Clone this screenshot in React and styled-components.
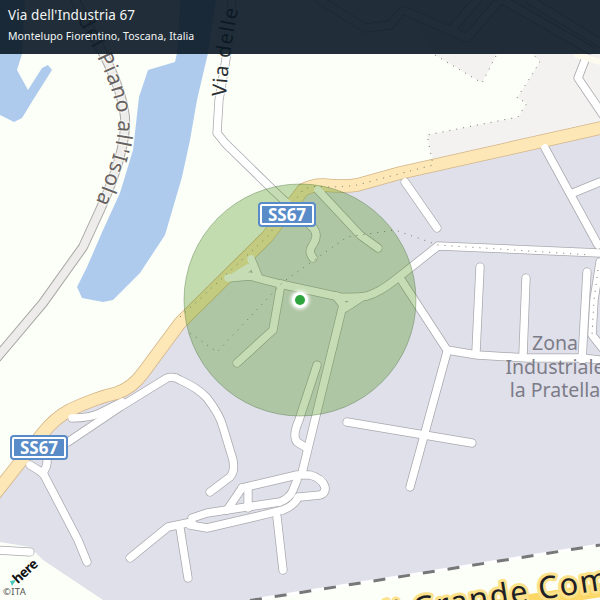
import React from 'react';
import styled, { createGlobalStyle } from 'styled-components';

const GlobalStyle = createGlobalStyle`
  html, body { margin: 0; padding: 0; background: #fcfff8; }
  body { font-family: "Noto Sans", sans-serif; }
`;

// white street network, in map coordinates
const streets = [
  'M228 278 L250 276 L280 284 L340 297 Q356 298 367 296 Q380 292 395 280 L438 246 L600 253',
  'M251 259 L258 276',
  'M235 276 L248 268',
  'M336 296 L345 308 L362 297',
  'M343 305 L302 473',
  'M317 365 L299 420 Q292 436 297 442 L305 447',
  'M281 284 L273 330 L237 363',
  'M318 190 L360 235 L378 248',
  'M273 190 L305 220 L314 229 Q319 236 312 246 Q308 252 313 258',
  'M232 0 L227 53 L219 100 L217 133 L225 143 L273 190',
  'M400 278 L447 350 L477 355 L527 358 L582 358 L600 360',
  'M447 352 L410 487',
  'M347 422 L472 443',
  'M405 182 L437 228',
  'M480 267 L476 352',
  'M526 278 L523 355',
  'M587 272 L582 360',
  'M545 148 L598 245',
  'M573 193 L600 182',
  'M600 262 L594 300 L592 335 L604 350',
  'M68 442 L120 407 L167 378 Q174 376 180 380 Q198 388 207 398 Q220 415 223 427 L233 460 Q235 472 230 477 L210 492',
  'M72 418 Q90 418 100 413 L122 402',
  'M30 465 L43 473 L78 540 L87 562',
  'M47 458 Q48 468 42 473',
  'M130 558 L168 527 L192 522',
  'M192 518 L207 513 L240 508 L280 502 Q290 498 293 490 L297 480',
  'M190 525 L207 528 L250 518 L283 510 Q295 505 298 497',
  'M242 488 L297 475 L310 475 Q322 478 325 487 Q326 493 320 495 L300 497',
  'M242 488 L227 510',
  'M248 488 L248 508',
  'M277 517 L283 570',
  'M180 528 L188 578',
  'M-5 550 L30 552',
  'M585 60 L578 78 L603 115',
  'M320 0 L365 28 L390 25 L403 10 L467 38 L500 0',
  'M453 28 L477 0',
  'M503 0 L590 50',
  'M530 0 L600 43',
];

const MapFrame = styled.main`
  position: relative;
  width: 600px;
  height: 600px;
  overflow: hidden;
  background: #fcfff8;
`;

const MapDrawing = styled.svg`
  display: block;
  width: 600px;
  height: 600px;
`;

const Area = styled.path`
  fill: ${(p) => p.$fill};
`;

const Line = styled.path`
  fill: none;
  stroke: ${(p) => p.$color};
  stroke-width: ${(p) => p.$width}px;
  stroke-linecap: round;
  stroke-linejoin: round;
`;

const Rail = styled.path`
  fill: none;
  stroke: ${(p) => p.$color};
  stroke-width: 3px;
  stroke-dasharray: ${(p) => p.$dash};
`;

const Dots = styled.path`
  fill: none;
  stroke: #77776f;
  stroke-width: 1px;
  stroke-dasharray: 1 6;
`;

const RoadName = styled.text`
  font-family: "Noto Sans", sans-serif;
  font-size: ${(p) => p.$size}px;
  letter-spacing: ${(p) => p.$spacing}px;
  fill: ${(p) => p.$color};
  stroke: ${(p) => p.$halo};
  stroke-width: ${(p) => p.$haloWidth}px;
  stroke-linejoin: round;
  paint-order: stroke;
`;

const PlaceName = styled.text`
  font-family: "Noto Sans", sans-serif;
  font-size: 19.5px;
  fill: #7c7c88;
  text-anchor: middle;
`;

const Header = styled.header`
  position: absolute;
  top: 0;
  left: 0;
  right: 0;
  height: 54px;
  box-sizing: border-box;
  padding: 6px 8px;
  background: rgba(9, 23, 36, 0.9);
  color: #f4f6f6;
`;

const Street = styled.div`
  font-size: 13.5px;
  line-height: 18px;
  letter-spacing: 0.1px;
`;

const Locality = styled.div`
  margin-top: 5px;
  font-size: 10.5px;
  line-height: 14px;
  letter-spacing: 0.1px;
`;

const Shield = styled.div`
  position: absolute;
  left: ${(p) => p.$x}px;
  top: ${(p) => p.$y}px;
  box-sizing: border-box;
  width: 54px;
  height: 21px;
  border: 2px solid #fff;
  border-radius: 2px;
  box-shadow: 0 0 0 2px #5a8bc9;
  background: #5a8bc9;
  color: #fff;
  font-size: 17px;
  font-weight: 700;
  line-height: 17px;
  text-align: center;
`;

const PositionDot = styled.div`
  position: absolute;
  left: 295px;
  top: 295px;
  width: 10px;
  height: 10px;
  border-radius: 50%;
  background: #2ea53c;
  box-shadow: 0 0 0 3px #fff, 0 0 3px 5px rgba(255, 255, 255, 0.65);
`;

const Attribution = styled.div`
  position: absolute;
  left: 3px;
  bottom: 3px;
  color: #555;
  font-size: 9.5px;
  line-height: 11px;
  letter-spacing: 0.3px;
`;

const HereLogo = styled.div`
  position: absolute;
  left: 11px;
  top: 565px;
  color: #111;
  font-size: 13.5px;
  font-weight: 700;
  line-height: 13px;
  letter-spacing: -0.6px;
  transform: rotate(-42deg);
`;

const HereMark = styled.svg`
  position: absolute;
  left: 9px;
  top: 578px;
  width: 8px;
  height: 8px;
`;

function App() {
  return (
    <MapFrame>
      <GlobalStyle />
      <MapDrawing viewBox="0 0 600 600">
        <defs>
          <path id="piano" d="M75 0 L103 53 Q122 90 125 117 Q127 150 100 210" />
          <path id="delle" d="M219 96 Q222 50 233 0" />
          <path id="grande" d="M300 638 L620 587" />
        </defs>

        <Area $fill="#e0e0ea" d="M0 490 L43 433 L70 410 L117 393 L143 373 L180 323 L267 237 L303 190 L323 185 L357 185 L400 173 L600 128 L600 545 L250 600 L103 600 L43 560 L30 547 L0 542 Z" />
        <Area $fill="#f3f2f0" d="M533 54 L540 62 L517 98 L527 103 L518 117 L427 135 L433 163 L600 128 L600 0 L400 0 L435 55 L482 83 L497 54 Z" />
        <Area $fill="#aecbee" d="M180 0 L177 53 L175 62 L148 70 L139 97 L133 150 L120 193 L103 230 L100 237 L87 267 L77 287 L82 298 L103 302 L113 300 L140 273 L165 235 L182 177 L190 140 L197 100 L208 53 L216 0 Z" />
        <Area $fill="#aecbee" d="M0 0 L25 0 L22 54 L17 70 L28 90 L42 68 L48 65 L52 70 L33 100 L22 118 L14 122 L0 115 Z" />

        <Line $color="#aaa8a6" $width={10} d="M75 0 L103 53 Q122 90 125 117 Q127 150 100 210 L83 247 L43 303 L-5 360" />
        <Line $color="#eeecea" $width={8} d="M75 0 L103 53 Q122 90 125 117 Q127 150 100 210 L83 247 L43 303 L-5 360" />

        {streets.map((d) => <Line key={d} $color="#a8a8ae" $width={9} d={d} />)}
        <Line $color="#d3b488" $width={13.5} d="M-5 494 L43 433 Q55 418 70 410 Q95 398 117 393 Q132 388 143 373 L180 323 L267 237 L303 190 Q312 185 323 185 Q345 187 357 185 L400 173 L605 127" />
        <Line $color="#fde7b6" $width={12} d="M-5 494 L43 433 Q55 418 70 410 Q95 398 117 393 Q132 388 143 373 L180 323 L267 237 L303 190 Q312 185 323 185 Q345 187 357 185 L400 173 L605 127" />
        {streets.map((d) => <Line key={d} $color="#ffffff" $width={7.5} d={d} />)}
        <Line $color="#fdfbee" $width={6} d="M577 55 L600 62" />

        <Dots d="M190 333 L217 352 L283 282 L347 237 L395 230 L438 245 L590 255" />
        <Dots d="M180 317 L267 237 L303 190 Q312 185 323 187 Q345 187 357 185 L433 165 L427 135 L518 117 L527 103 L517 98 L540 62 L533 54" />
        <Dots d="M435 55 L482 83 L497 54" />
        <Dots d="M598 270 L594 300 L592 335" />

        <Rail $color="#ffffff" $dash="none" d="M250 600.5 L600 545" />
        <Rail $color="#77777a" $dash="12 13" d="M250 600.5 L600 545" />

        <Line $color="#fbd867" $width={14} d="M360 628 L620 587" />

        <RoadName $size={21} $spacing={1.7} $color="#676161" $halo="rgba(252,255,248,.5)" $haloWidth={3} dy="7">
          <textPath href="#piano" startOffset="18">del Piano all'Isola</textPath>
        </RoadName>
        <RoadName $size={20} $spacing={1.3} $color="#2c2f35" $halo="rgba(252,255,248,.85)" $haloWidth={3} dy="7">
          <textPath href="#delle">Via delle</textPath>
        </RoadName>
        <RoadName $size={31} $spacing={1.6} $color="#1f1f25" $halo="#fde28c" $haloWidth={6}>
          <textPath href="#grande" startOffset="76">di Grande Comunicazione</textPath>
        </RoadName>

        <PlaceName x="555" y="350">Zona</PlaceName>
        <PlaceName x="555" y="373.5">Industriale</PlaceName>
        <PlaceName x="555" y="397">la Pratella</PlaceName>

        <circle cx="300" cy="300" r="116" fill="rgba(62,140,8,.3)" stroke="rgba(60,100,50,.35)" />
      </MapDrawing>

      <Header>
        <Street>Via dell'Industria 67</Street>
        <Locality>Montelupo Fiorentino, Toscana, Italia</Locality>
      </Header>

      <Shield $x={260} $y={204}>SS67</Shield>
      <Shield $x={12} $y={437}>SS67</Shield>
      <PositionDot />

      <HereLogo>here</HereLogo>
      <HereMark viewBox="0 0 8 8"><path d="M1 3 L7 2 L3 8 Z" fill="#48c8bb" /></HereMark>
      <Attribution>©ITA</Attribution>
    </MapFrame>
  );
}

export default App;
